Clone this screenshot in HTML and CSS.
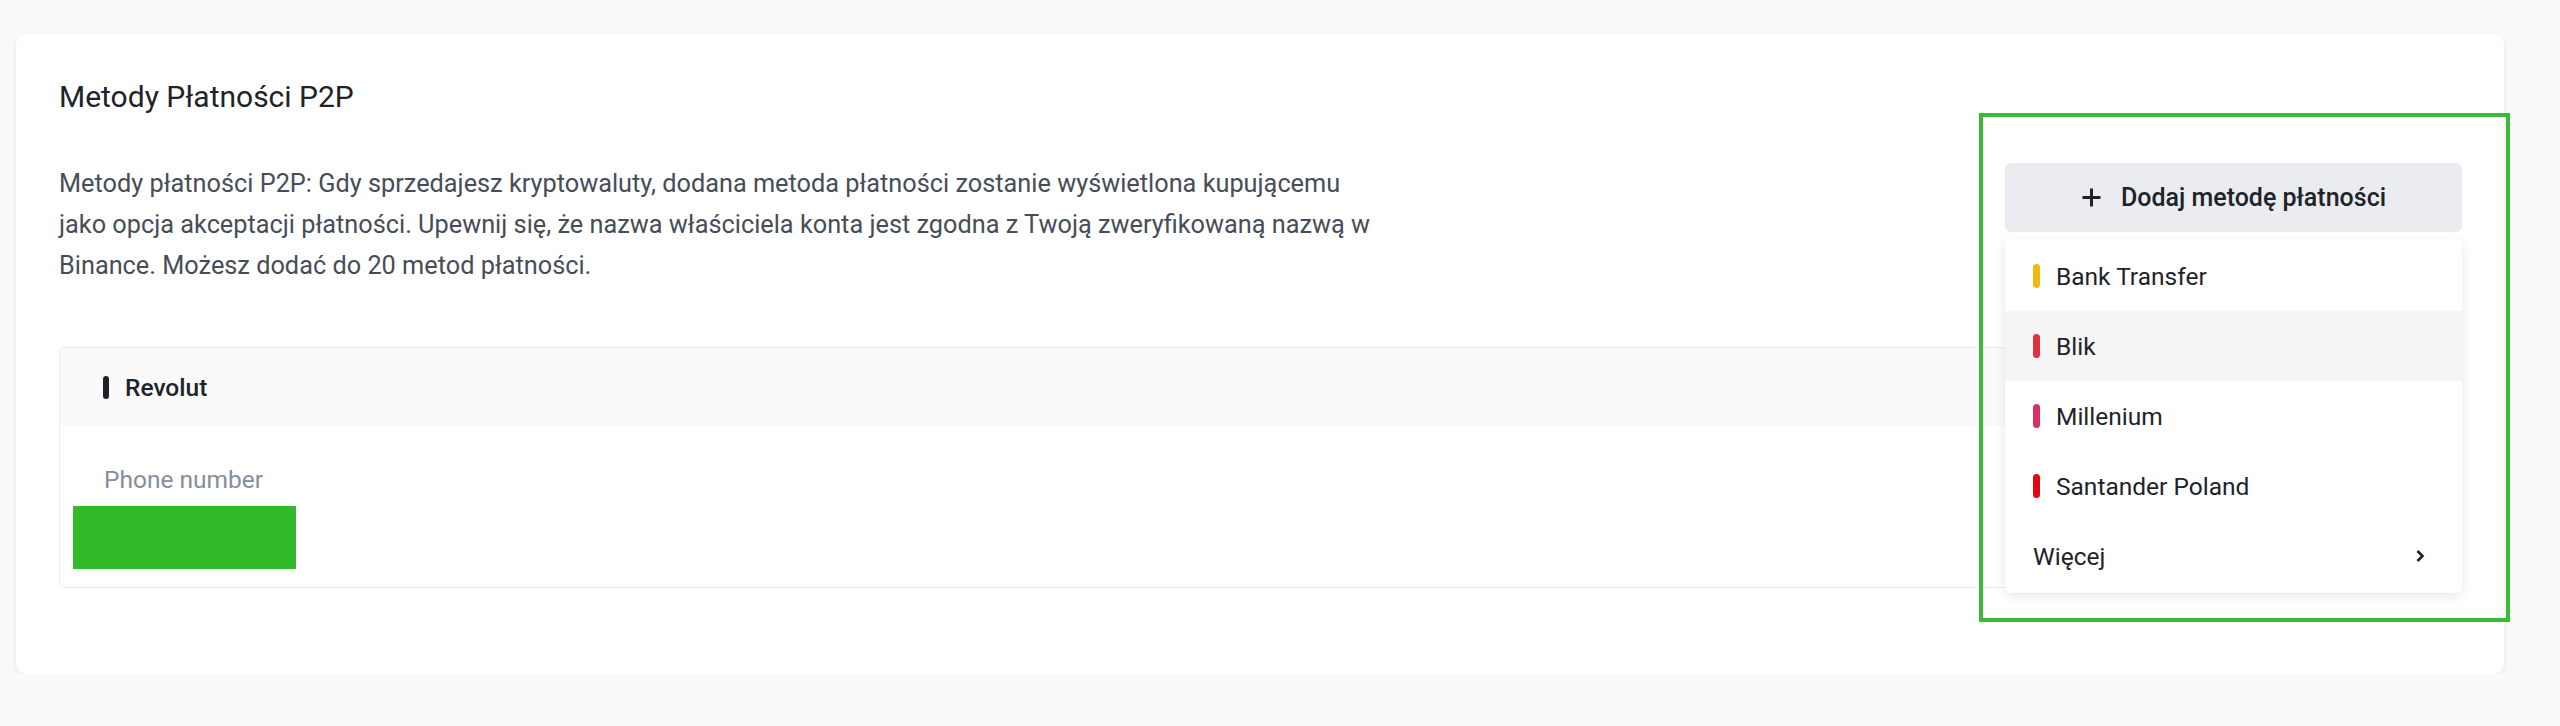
FILE: index.html
```html
<!DOCTYPE html>
<html lang="pl">
<head>
    <meta charset="UTF-8">
    <meta name="viewport" content="width=device-width, initial-scale=1.0">
    <title>Metody Płatności P2P</title>
    <link rel="stylesheet" href="styles.css">
</head>
<body>

    <div class="card">
        <div class="card-head">
            <div class="intro">
                <h2 class="title">Metody Płatności P2P</h2>
                <p class="desc">Metody płatności P2P: Gdy sprzedajesz kryptowaluty, dodana metoda płatności zostanie wyświetlona kupującemu jako opcja akceptacji płatności. Upewnij się, że nazwa właściciela konta jest zgodna z Twoją zweryfikowaną nazwą w Binance. Możesz dodać do 20 metod płatności.</p>
            </div>

            <div class="add-wrap">
                <button class="add-btn">
                    <svg width="21" height="21" viewBox="0 0 21 21"><path d="M10.5 1.5v18M1.5 10.5h18" stroke="#1e2329" stroke-width="3" fill="none"/></svg>
                    Dodaj metodę płatności
                </button>

                <!-- lista metod -->
                <ul class="menu">
                    <li><span class="bar yellow"></span>Bank Transfer</li>
                    <li class="hover"><span class="bar red"></span>Blik</li>
                    <li><span class="bar pink"></span>Millenium</li>
                    <li><span class="bar crimson"></span>Santander Poland</li>
                    <li class="more">Więcej
                        <svg width="10" height="14" viewBox="0 0 10 14"><path d="M2.5 2l5 5-5 5" stroke="#1e2329" stroke-width="2.6" fill="none"/></svg>
                    </li>
                </ul>

                <div class="mark"></div>
            </div>
        </div>

        <div class="method">
            <div class="method-head"><span class="bar dark"></span>Revolut</div>
            <div class="method-body">
                <div class="field-label">Phone number</div>
                <div class="field-value"></div>
            </div>
        </div>
    </div>

</body>
</html>
```

FILE: styles.css
```css
body {
    margin: 0;
    background-color: #fafafa;
    font-family: Roboto, "Noto Sans", sans-serif;
    color: #1e2329;
}
.card {
    margin: 34px 56px 0 16px;
    padding: 45px 42px 86px 43px;
    background-color: #fff;
    border-radius: 10px;
    box-shadow: 0 2px 6px rgba(0, 0, 0, 0.08);
}
.card-head {
    display: flex;
    justify-content: space-between;
}
.intro {
    width: 1325px;
}
.title {
    margin: 0;
    font-size: 30px;
    line-height: 36px;
    font-weight: 400;
    color: #1e2329;
}
.desc {
    margin: 48px 0 0;
    font-size: 25.3px;
    line-height: 41px;
    color: #474d57;
}

/* Button + Dropdown */
.add-wrap {
    position: relative;
    z-index: 2;
    width: 457px;
    margin-top: 84px;
    align-self: flex-start;
}
.add-btn {
    display: flex;
    align-items: center;
    justify-content: center;
    gap: 19px;
    width: 100%;
    height: 69px;
    border: none;
    border-radius: 6px;
    background-color: #eaecef;
    font-family: inherit;
    font-size: 25px;
    font-weight: 500;
    color: #1e2329;
    cursor: pointer;
}
.menu {
    position: absolute;
    top: 76px;
    left: 0;
    right: 0;
    margin: 0;
    padding: 2px 0;
    list-style: none;
    background-color: #fff;
    border-radius: 6px;
    box-shadow: 0 3px 12px rgba(0, 0, 0, 0.1);
}
.menu li {
    display: flex;
    align-items: center;
    gap: 16px;
    height: 70px;
    padding: 0 37px 0 28px;
    font-size: 24.5px;
    color: #1e2329;
}
.menu li.hover {
    background-color: #f5f5f5;
}
.menu li.more {
    justify-content: space-between;
}
.bar {
    display: inline-block;
    width: 7px;
    height: 24px;
    border-radius: 4px;
}
.yellow { background-color: #f0b90b; }
.red { background-color: #e0303c; }
.pink { background-color: #d9305f; }
.crimson { background-color: #e3080f; }
.dark { background-color: #1e2329; width: 6px; height: 23px; }

.mark {
    position: absolute;
    left: -26px;
    top: -50px;
    right: -48px;
    bottom: -390px;
    border: 4px solid #3dba35;
    pointer-events: none;
}

/* Revolut */
.method {
    margin-top: 61px;
    border: 1px solid #eaecef;
    border-radius: 6px;
}
.method-head {
    display: flex;
    align-items: center;
    gap: 16px;
    height: 78px;
    padding-left: 43px;
    background-color: #fafafa;
    font-size: 24.5px;
    line-height: 35px;
    font-weight: 500;
    border-radius: 6px 6px 0 0;
}
.method-body {
    padding: 36px 44px 18px;
}
.field-label {
    font-size: 24.5px;
    line-height: 35px;
    color: #848e9c;
}
.field-value {
    width: 223px;
    height: 63px;
    margin: 9px 0 0 -31px;
    background-color: #32bb29;
}
```
